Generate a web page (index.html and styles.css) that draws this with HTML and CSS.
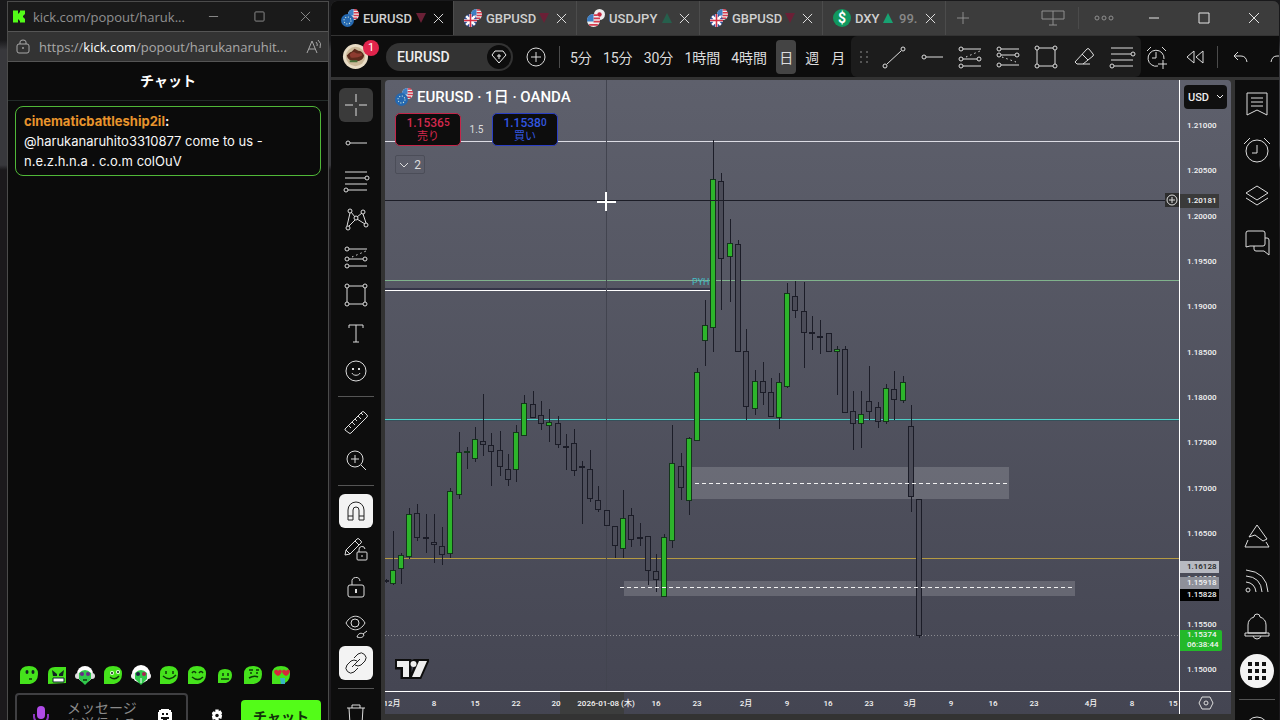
FILE: index.html
```html
<!DOCTYPE html>
<html lang="ja">
<head>
<meta charset="utf-8">
<title>EURUSD</title>
<link rel="stylesheet" href="styles.css">
</head>
<body>
<svg class="defs" aria-hidden="true">
  <symbol id="cross" viewBox="0 0 28 28"><path d="M14 3v8M14 17v8M3 14h8M17 14h8"/></symbol>
  <symbol id="hline" viewBox="0 0 28 28"><circle cx="6" cy="14" r="2"/><path d="M8 14h17"/></symbol>
  <symbol id="fib" viewBox="0 0 28 28"><path d="M3 5h22M3 11h20M3 17h22M6 23h19"/><circle cx="25" cy="11" r="2"/><circle cx="4" cy="23" r="2"/></symbol>
  <symbol id="pattern" viewBox="0 0 28 28"><path d="M5 21 8 8M9 7l4 5M15 12l5-4M21 9l3 9M23 19l-8-5M13 15l-6 6"/><circle cx="8" cy="6" r="2"/><circle cx="21" cy="7" r="2"/><circle cx="14" cy="13" r="2"/><circle cx="24" cy="20" r="2"/><circle cx="6" cy="23" r="2"/></symbol>
  <symbol id="trend" viewBox="0 0 28 28"><path d="M7 6h18M7 16h14M7 23h18"/><path d="M10 14 24 8" stroke-dasharray="1.5 3"/><circle cx="5" cy="6" r="2"/><circle cx="5" cy="16" r="2"/><circle cx="23" cy="16" r="2"/><circle cx="5" cy="23" r="2"/></symbol>
  <symbol id="trend2" viewBox="0 0 28 28"><path d="M7 6h18M7 12h14M7 22h18"/><path d="M8 14l14 5" stroke-dasharray="1.5 3"/><circle cx="5" cy="6" r="2"/><circle cx="5" cy="12" r="2"/><circle cx="23" cy="12" r="2"/><circle cx="5" cy="22" r="2"/></symbol>
  <symbol id="rect" viewBox="0 0 28 28"><path d="M7 5h14M7 23h14M5 7v14M23 7v14"/><circle cx="5" cy="5" r="2"/><circle cx="23" cy="5" r="2"/><circle cx="5" cy="23" r="2"/><circle cx="23" cy="23" r="2"/></symbol>
  <symbol id="type" viewBox="0 0 28 28"><path d="M7 9V6h14v3M14 6v17M11 23h6"/></symbol>
  <symbol id="smile" viewBox="0 0 28 28"><circle cx="14" cy="14" r="10"/><path d="M10 16c1 3 7 3 8 0"/><path d="M11 11v2M17 11v2" stroke-width="2"/></symbol>
  <symbol id="ruler" viewBox="0 0 28 28"><path d="M3 21 20 4q1-1 2 0l3 3q1 1 0 2L9 25q-1 1-2 0l-4-3zM7 18l2 2M10 14l3 3M13 11l2 2M16 8l3 3M19 5l2 2"/></symbol>
  <symbol id="zoom" viewBox="0 0 28 28"><circle cx="13" cy="13" r="8"/><path d="M19 19l5 5M9 13h8M13 9v8"/></symbol>
  <symbol id="magnet" viewBox="0 0 28 28"><path d="M6 23V13a8 8 0 0 1 16 0v10h-5V13a3 3 0 0 0-6 0v10zM6 19h5M17 19h5"/></symbol>
  <symbol id="penlock" viewBox="0 0 28 28"><path d="M3 20l1-5L15 4q1-1 2 0l2 2q1 1 0 2L8 19zM13 6l4 4M4 15l4 4"/><rect x="15" y="17" width="10" height="8" rx="1"/><path d="M17 17v-2a3 3 0 0 1 6-1M20 20v2"/></symbol>
  <symbol id="lock" viewBox="0 0 28 28"><rect x="6" y="12" width="16" height="12" rx="2"/><path d="M10 12V9a4 4 0 0 1 8-1"/><path d="M14 16v4" stroke-width="2"/></symbol>
  <symbol id="eye" viewBox="0 0 28 28"><path d="M4 12c5-9 14-9 19 0c-5 9-14 9-19 0z"/><circle cx="13" cy="12" r="4"/><path d="M15 26c1-4 5-5 7-2c-1 3-4 3-7 2zM21 23l4-3"/></symbol>
  <symbol id="link" viewBox="0 0 28 28"><path d="M12 9l4-4a5 5 0 0 1 7 7l-4 4q-3 2-6 0M16 19l-4 4a5 5 0 0 1-7-7l4-4q3-2 6 0M10 18l8-8"/></symbol>
  <symbol id="trash" viewBox="0 0 28 28"><path d="M5 8h18M10 8V5h8v3M7 8l1 16h12l1-16"/></symbol>
  <symbol id="line" viewBox="0 0 28 28"><circle cx="5" cy="23" r="2"/><circle cx="23" cy="6" r="2"/><path d="M7 21 21 8"/></symbol>
  <symbol id="eraser" viewBox="0 0 28 28"><path d="M5 19 17 6q1-1 2 0l4 5q1 1 0 2L13 21H7zM12 11l6 6M13 21h7"/></symbol>
  <symbol id="alarmadd" viewBox="0 0 28 28"><path d="M21 16a8 8 0 1 0-6 7M13 9v6H9M4 8l4-4M19 4l4 4M20 17v9M15 21h9"/></symbol>
  <symbol id="rewind" viewBox="0 0 28 28"><path d="M13 8v12l-7-6zM22 8v12l-7-6z"/></symbol>
  <symbol id="undo" viewBox="0 0 28 28"><path d="M12 9l-4 4 4 4M8 13h7q5 0 6 6"/></symbol>
  <symbol id="redo" viewBox="0 0 28 28"><path d="M16 9l4 4-4 4M20 13h-7q-5 0-6 6"/></symbol>
  <symbol id="close" viewBox="0 0 12 12"><path d="M1 1l10 10M11 1 1 11"/></symbol>
  <symbol id="list" viewBox="0 0 28 28"><path d="M4 3h20v22l-10-5-10 5zM8 8h12M8 12h12M8 16h12"/></symbol>
  <symbol id="alarm" viewBox="0 0 28 28"><circle cx="14" cy="15" r="11"/><path d="M14 9v8H9M1 8l6-6M21 2l6 6"/></symbol>
  <symbol id="layers" viewBox="0 0 28 28"><path d="M14 4 25 11 14 18 3 11zM3 16l11 7 11-7"/></symbol>
  <symbol id="chats" viewBox="0 0 28 28"><path d="M3 19V5q0-2 2-2h15q2 0 2 2v11q0 2-2 2H7zM22 10h2q2 0 2 2v15l-5-4h-8q-2 0-2-2v-3"/></symbol>
  <symbol id="hill" viewBox="0 0 28 28"><path d="M14 3 24 17 20 19 12 13 6 15zM5 18 2 25h24l-3-5"/></symbol>
  <symbol id="feed" viewBox="0 0 28 28"><circle cx="5" cy="23" r="2"/><path d="M3 3q21 2 22 22M3 9q15 1 16 16M3 15q9 1 10 10"/></symbol>
  <symbol id="bell" viewBox="0 0 28 28"><path d="M5 21v-8q0-6 6-8 0-3 3-3t3 3q6 2 6 8v8zM2 21h24v3H2zM10 24q1 3 4 3t4-3"/></symbol>
  <symbol id="apps" viewBox="0 0 34 34"><path d="M8 8h4v4H8zM15 8h4v4h-4zM22 8h4v4h-4zM8 15h4v4H8zM15 15h4v4h-4zM22 15h4v4h-4zM8 22h4v4H8zM15 22h4v4h-4zM22 22h4v4h-4z"/></symbol>
  <symbol id="us" viewBox="0 0 12 12"><circle cx="6" cy="6" r="6" fill="#eee"/><path d="M6 1h4M6 4h6M6 7h6M2 10h8" stroke="#d43b4e" stroke-width="1.6"/><path d="M0 7a6 6 0 0 1 6-7v7z" fill="#3e7fc4"/></symbol>
  <symbol id="eu" viewBox="0 0 12 12"><circle cx="6" cy="6" r="6" fill="#2568b0"/><circle cx="6" cy="6" r="3.2" stroke="#cde3dc" stroke-width="1" stroke-dasharray="1 1.5"/></symbol>
  <symbol id="gb" viewBox="0 0 12 12"><circle cx="6" cy="6" r="6" fill="#31529b"/><path d="M2 2l8 8M10 2l-8 8M6 0v12M0 6h12" stroke="#fff" stroke-width="2.2"/><path d="M6 0v12M0 6h12" stroke="#d32f45" stroke-width="1.4"/></symbol>
  <symbol id="jp" viewBox="0 0 12 12"><circle cx="6" cy="6" r="6" fill="#eee"/><circle cx="6" cy="6" r="2.4" fill="#c62840"/></symbol>
  <symbol id="eurusd" viewBox="0 0 18 18"><use href="#us" x="7" y="0" width="11" height="11"/><use href="#eu" x="0" y="5" width="13" height="13"/></symbol>
  <symbol id="gbpusd" viewBox="0 0 18 18"><use href="#us" x="7" y="0" width="11" height="11"/><use href="#gb" x="0" y="5" width="13" height="13"/></symbol>
  <symbol id="usdjpy" viewBox="0 0 18 18"><use href="#jp" x="7" y="0" width="11" height="11"/><use href="#us" x="0" y="5" width="13" height="13"/></symbol>
  <symbol id="blob" viewBox="0 0 20 20"><path d="M1 19V9Q1 1 10 1t9 8-8 10z" fill="#45e21c"/></symbol>
</svg>

<div class="desktop">
  <section class="chat">
    <header class="chat-title">
      <svg class="kick" viewBox="0 0 12 12"><path d="M0 0h5v3h1V2h1V0h5v4h-1v1h-1v2h1v1h1v4H7v-2H6V9H5v3H0z" fill="#53fc18"/></svg>
      <span class="chat-name">kick.com/popout/haruk...</span>
      <button class="win" aria-label="最小化"><svg viewBox="0 0 12 12"><path d="M1 6h10"/></svg></button>
      <button class="win" aria-label="最大化"><svg viewBox="0 0 12 12"><rect x="1" y="1" width="10" height="10" rx="1"/></svg></button>
      <button class="win" aria-label="閉じる"><svg><use href="#close"/></svg></button>
    </header>
    <div class="address">
      <svg class="padlock" viewBox="0 0 14 16"><rect x="1" y="5" width="12" height="9" rx="2"/><path d="M4 5V3q0-2 3-2t3 2v2"/><circle cx="7" cy="9" r=".6"/></svg>
      <span class="url">https://<b>kick.com</b>/popout/harukanaruhit...</span>
      <svg class="aloud" viewBox="0 0 16 16"><path d="M1 14 6 2l5 12M3 10h6M10 3q2 2 1 4M12 1q4 3 2 8"/></svg>
    </div>
    <h1 class="chat-head">チャット</h1>
    <div class="messages">
      <p class="message"><b>cinematicbattleship2il</b><strong>:</strong><br>@harukanaruhito3310877 come to us -<br>n.e.z.h.n.a . c.o.m colOuV</p>
    </div>
    <div class="emotes">
      <svg viewBox="0 0 20 20"><use href="#blob"/><ellipse cx="8" cy="7" rx="1.500" ry="2"/><ellipse cx="14" cy="7" rx="1.500" ry="2"/><path d="M10 14h3" class="mouth"/></svg>
      <svg viewBox="0 0 20 20"><path d="M1 19V9q0-7 7-7h11v16z" fill="#45e21c"/><path d="M5 5l5 4v2H6zM17 5l-5 4v2h4z"/><path d="M6 13h11v4H6z" fill="#fff" stroke="#123" /></svg>
      <svg viewBox="0 0 20 20"><circle cx="10" cy="9" r="8" fill="#fff"/><circle cx="3" cy="11" r="3" fill="#ddd"/><circle cx="17" cy="11" r="3" fill="#ddd"/><path d="M4 8q6-6 12 0v6l-6 6-6-6z" fill="#2fc94b"/><circle cx="7" cy="9" r="2" fill="#6a2a8a"/><circle cx="13" cy="9" r="2" fill="#6a2a8a"/><path d="M8 15h4" class="mouth"/></svg>
      <svg viewBox="0 0 20 20"><use href="#blob"/><circle cx="9" cy="8" r="2" fill="#e9ffe0"/><circle cx="15" cy="7" r="2" fill="#e9ffe0"/><circle cx="9" cy="8" r="1"/><circle cx="15" cy="7" r="1"/><path d="M7 12q5 4 9-1" class="mouth"/></svg>
      <svg viewBox="0 0 20 20"><circle cx="10" cy="9" r="9" fill="#fff"/><circle cx="3" cy="11" r="3" fill="#eee"/><circle cx="17" cy="11" r="3" fill="#eee"/><path d="M4 8q6-6 12 0v6l-6 6-6-6z" fill="#2fc94b"/><circle cx="7" cy="9" r="2" fill="#224"/><circle cx="13" cy="9" r="2" fill="#a25"/><path d="M10 13v5" stroke="#fff"/></svg>
      <svg viewBox="0 0 20 20"><use href="#blob"/><path d="M7 6v3M14 6v3M4 11q7 6 13-1" class="mouth"/></svg>
      <svg viewBox="0 0 20 20"><use href="#blob"/><path d="M5 8q2-3 4 0M12 8q2-3 4 0M5 12q6 5 11 0" class="mouth"/></svg>
      <svg viewBox="0 0 20 20"><path d="M3 18v-8q0-6 7-6t7 6-6 8z" fill="#45e21c"/><path d="M8 8v3M13 8v3M6 14h8" class="mouth"/></svg>
      <svg viewBox="0 0 20 20"><use href="#blob"/><path d="M6 5h4M13 5h3M8 7v2M14 7v2M6 13q5-3 9-1" class="mouth"/></svg>
      <svg viewBox="0 0 20 20"><use href="#blob"/><path d="M3 6q3-3 4 0 2-3 4 0-1 4-4 5-4-2-4-5zM11 6q2-3 4 0 2-3 4 0-1 4-4 5-4-2-4-5z" fill="#d8263c"/><path d="M9 13h5v6h-4z" fill="#38b6c4"/></svg>
    </div>
    <form class="composer">
      <div class="field">
        <svg class="mic" viewBox="0 0 16 22"><rect x="4" y="1" width="8" height="13" rx="4" fill="#b04be8"/><path d="M1 9v3q1 6 7 6t7-6V9M8 18v3" stroke="#8a35bb" stroke-width="2"/></svg>
        <textarea aria-label="メッセージを送信する" placeholder="メッセージを送信する"></textarea>
        <svg class="face" viewBox="0 0 14 14"><path d="M3 0h8v1h2v2h1v8h-1v2H1v-2H0V3h1V1h2z" fill="#fff"/><path d="M4 4h2v2H4zM8 4h2v2H8zM3 8h8v2H9v2H5v-2H3z"/></svg>
      </div>
      <button class="gear" type="button" aria-label="設定"><svg viewBox="0 0 14 14"><path d="M5 0h4v2l2-1 2 3-1 2 1 1-1 4-3-1v3H5v-2l-3 1-1-4 1-1-1-3 2-2 2 1z" fill="#fff"/><circle cx="7" cy="7" r="2" fill="#111"/></svg></button>
      <button class="send" type="button">チャット</button>
    </form>
  </section>

  <main class="app">
    <nav class="tabs">
      <div class="tab active"><svg class="pair"><use href="#eurusd"/></svg><span>EURUSD</span><i class="down"></i><button aria-label="閉じる"><svg><use href="#close"/></svg></button></div>
      <div class="tab"><svg class="pair"><use href="#gbpusd"/></svg><span>GBPUSD</span><i class="down"></i><button aria-label="閉じる"><svg><use href="#close"/></svg></button></div>
      <div class="tab"><svg class="pair"><use href="#usdjpy"/></svg><span>USDJPY</span><i class="up dim"></i><button aria-label="閉じる"><svg><use href="#close"/></svg></button></div>
      <div class="tab"><svg class="pair"><use href="#gbpusd"/></svg><span>GBPUSD</span><i class="down"></i><button aria-label="閉じる"><svg><use href="#close"/></svg></button></div>
      <div class="tab"><b class="dollar">$</b><span>DXY</span><i class="up"></i><span class="quote">99.</span><button aria-label="閉じる"><svg><use href="#close"/></svg></button></div>
      <button class="add" aria-label="新しいタブ"><svg viewBox="0 0 14 14"><path d="M7 0v14M0 7h14"/></svg></button>
      <div class="window-tools">
        <button aria-label="画面"><svg class="wide" viewBox="0 0 26 18"><path d="M2 2h22v8H2zM13 2v14M9 16h8"/></svg></button>
        <i class="bar"></i>
        <button aria-label="メニュー"><svg class="wide" viewBox="0 0 26 18"><circle cx="6" cy="9" r="2"/><circle cx="13" cy="9" r="2"/><circle cx="20" cy="9" r="2"/></svg></button>
        <button class="light" aria-label="最小化"><svg viewBox="0 0 12 12"><path d="M1 6h10"/></svg></button>
        <button class="light" aria-label="最大化"><svg viewBox="0 0 12 12"><path d="M1 1h10v10H1z"/></svg></button>
        <button class="light" aria-label="閉じる"><svg><use href="#close"/></svg></button>
      </div>
    </nav>

    <div class="toolbar">
      <div class="avatar">
        <svg viewBox="0 0 28 28"><circle cx="14" cy="14" r="13" fill="#e8dcc5"/><circle cx="14" cy="14" r="10" fill="#cbb898"/><path d="M5 13q3-4 5-4l3-3 4 2q4 0 6 5-1 6-9 6t-9-6z" fill="#5c2a1c"/><path d="M8 12q3-4 6-2t6 0l1 3q-6 3-12 2z" fill="#8e3b30"/><path d="M8 19h8" stroke="#487038" stroke-width="2"/></svg>
        <span class="badge">1</span>
      </div>
      <button class="symbol"><span>EURUSD</span><svg viewBox="0 0 24 24"><circle cx="12" cy="12" r="12" fill="#0d0d0d"/><path d="M8 6h8l3 4-7 8-7-8zM12 9v5M10 11h4"/></svg></button>
      <button class="compare" aria-label="比較"><svg viewBox="0 0 22 22"><circle cx="11" cy="11" r="9"/><path d="M11 6v10M6 11h10"/></svg></button>
      <i class="bar"></i>
      <div class="frames">
        <button>5分</button><button>15分</button><button>30分</button><button>1時間</button><button>4時間</button><button class="short on">日</button><button class="short">週</button><button class="short">月</button>
      </div>
      <div class="drawings">
        <svg class="grip" viewBox="0 0 10 14"><path d="M1 1h2v2H1zM7 1h2v2H7zM1 6h2v2H1zM7 6h2v2H7zM1 11h2v2H1zM7 11h2v2H7z" fill="#555"/></svg>
        <button aria-label="トレンドライン"><svg><use href="#line"/></svg></button>
        <button aria-label="水平レイ"><svg><use href="#hline"/></svg></button>
        <button aria-label="ロング"><svg><use href="#trend"/></svg></button>
        <button aria-label="ショート"><svg><use href="#trend2"/></svg></button>
        <button aria-label="四角形"><svg><use href="#rect"/></svg></button>
        <button aria-label="消しゴム"><svg><use href="#eraser"/></svg></button>
        <button aria-label="フィボナッチ"><svg><use href="#fib"/></svg></button>
      </div>
      <div class="actions">
        <button aria-label="アラート"><svg><use href="#alarmadd"/></svg></button>
        <button aria-label="リプレイ"><svg><use href="#rewind"/></svg></button>
        <i class="bar"></i>
        <button aria-label="元に戻す"><svg><use href="#undo"/></svg></button>
        <button aria-label="やり直し"><svg><use href="#redo"/></svg></button>
      </div>
    </div>

    <div class="workspace">
      <aside class="tools">
        <button class="on" aria-label="十字"><svg><use href="#cross"/></svg></button>
        <button aria-label="水平レイ"><svg><use href="#hline"/></svg></button>
        <button aria-label="フィボナッチ"><svg><use href="#fib"/></svg></button>
        <button aria-label="パターン"><svg><use href="#pattern"/></svg></button>
        <button aria-label="予測"><svg><use href="#trend"/></svg></button>
        <button aria-label="図形"><svg><use href="#rect"/></svg></button>
        <button aria-label="テキスト"><svg><use href="#type"/></svg></button>
        <button aria-label="アイコン"><svg><use href="#smile"/></svg></button>
        <hr>
        <button aria-label="計測"><svg><use href="#ruler"/></svg></button>
        <button aria-label="ズーム"><svg><use href="#zoom"/></svg></button>
        <hr>
        <button class="white" aria-label="マグネット"><svg><use href="#magnet"/></svg></button>
        <button aria-label="描画モード"><svg><use href="#penlock"/></svg></button>
        <button aria-label="ロック"><svg><use href="#lock"/></svg></button>
        <button aria-label="表示"><svg><use href="#eye"/></svg></button>
        <button class="white" aria-label="同期"><svg><use href="#link"/></svg></button>
        <hr>
        <button aria-label="削除"><svg><use href="#trash"/></svg></button>
      </aside>

      <section class="chart">
        <div class="pane">
          <svg class="plot" id="plot">
            <g transform="translate(-385 -80)">
              <rect x="691" y="467" width="318" height="32" class="zone"/>
              <rect x="624" y="581" width="451" height="15" class="zone"/>
              <path d="M385 141.500H3000" stroke="#dcdce4"/>
              <path d="M385 280.500H3000" stroke="#80b28c"/>
              <path d="M385 289H711" stroke="#15152c"/><path d="M385 290.500H711" stroke="#fff"/>
              <path d="M385 420.500H3000" stroke="#36505a"/>
              <path d="M385 419.500H3000" stroke="#4fd0c8"/>
              <path d="M385 558.500H3000" stroke="#b59a42"/>
              <path d="M385 635.500H3000" stroke="#8a8b91" stroke-dasharray="1 2"/>
              <path d="M606.500 80V700" stroke="#42444f"/>
              <text x="692" y="285" class="pyh">PYH</text>
              <g id="candles"></g>
              <path d="M695 483.500H1009M620 587.500H1075" stroke="#f1f1f1" stroke-dasharray="4 3"/>
              <path d="M385 200.500H3000" stroke="#1c1d27"/>
              <path d="M606 192v19M597 202h19" stroke="#fff" stroke-width="2"/>
            </g>
          </svg>
          <div class="legend">
            <h2><svg class="pair"><use href="#eurusd"/></svg>EURUSD · 1日 · OANDA</h2>
            <div class="trade">
              <button class="sell"><span>1.1536<small>5</small></span>売り</button>
              <span class="spread">1.5</span>
              <button class="buy"><span>1.1538<small>0</small></span>買い</button>
            </div>
            <button class="collapse"><svg viewBox="0 0 10 6"><path d="M1 1l4 4 4-4"/></svg>2</button>
          </div>
          <svg class="logo" viewBox="0 0 34 20"><path d="M1 1h14v18H7V9H1zM17 5a3.500 3.500 0 1 1 5 3zM23 1h10l-8 18h-9z" fill="#0d0d0d" stroke="#0d0d0d" stroke-width="3"/><path d="M2 2h12v16H8V8H2zM24 2h8l-7 16h-8z" fill="#eee"/><circle cx="18.500" cy="5" r="3" fill="#eee"/></svg>
          <button class="plus" aria-label="追加"><svg viewBox="0 0 14 14"><circle cx="7" cy="7" r="5"/><path d="M7 4v6M4 7h6"/></svg></button>
        </div>
        <div class="prices">
          <div class="currency">
            <select aria-label="通貨"><option>USD</option></select>
            <svg viewBox="0 0 8 6"><path d="M1 1l3 3 3-3"/></svg>
          </div>
          <ol>
            <li>1.21000</li><li>1.20500</li><li>1.20000</li><li>1.19500</li><li>1.19000</li><li>1.18500</li><li>1.18000</li><li>1.17500</li><li>1.17000</li><li>1.16500</li><li>1.16000</li><li>1.15500</li><li>1.15000</li>
          </ol>
          <span class="tag cursor">1.20181</span>
          <span class="tag pale">1.16128</span>
          <span class="tag mid">1.15918</span>
          <span class="tag black">1.15828</span>
          <span class="tag last">1.15374<br>06:38:44</span>
        </div>
        <svg class="times" id="times"></svg>
        <button class="hex" aria-label="設定"><svg viewBox="0 0 16 16"><path d="M4 2h8l3 6-3 6H4L1 8z"/><circle cx="8" cy="8" r="2"/></svg></button>
      </section>

      <aside class="side">
        <button aria-label="ウォッチリスト"><svg><use href="#list"/></svg></button>
        <button aria-label="アラート"><svg><use href="#alarm"/></svg></button>
        <button aria-label="オブジェクト"><svg><use href="#layers"/></svg></button>
        <button aria-label="チャット"><svg><use href="#chats"/></svg></button>
        <div class="side-end">
          <button aria-label="アイデア"><svg><use href="#hill"/></svg></button>
          <button aria-label="配信"><svg><use href="#feed"/></svg></button>
          <button aria-label="通知"><svg><use href="#bell"/></svg></button>
          <button class="apps" aria-label="アプリ"><svg><use href="#apps"/></svg></button>
          <hr>
          <button aria-label="ヘルプ"><svg viewBox="0 0 28 28"><circle cx="14" cy="14" r="11"/><path d="M10 11q0-4 4-4t4 4q0 2-4 4v2"/></svg></button>
        </div>
      </aside>
    </div>
  </main>
</div>
<script src="chart.js"></script>
</body>
</html>
```
FILE: styles.css
```css
* { box-sizing: border-box; }
body { margin: 0; background: #242426; color: #ddd; font-family: Roboto, "Noto Sans CJK JP", sans-serif; font-size: 14px; }
button { background: none; border: 0; padding: 0; margin: 0; color: inherit; font: inherit; display: flex; align-items: center; justify-content: center; flex: none; }
svg { fill: none; stroke: currentColor; flex: none; display: block; }
svg [fill]:not([stroke]) { stroke: none; }
.defs { position: absolute; width: 0; height: 0; }
.desktop { display: flex; height: 100vh; overflow: hidden; padding: 1px 1px 0 7px; gap: 2px; background: linear-gradient(#19191b 40px, #38383c 50px, #38383c 165px, #1b191c 170px); }

.chat { width: 322px; flex: none; display: flex; flex-direction: column; background: #0b0b0b; border: solid #4b4b4b; border-width: 1px 1px 0; }
.chat-title { display: flex; align-items: center; height: 29px; padding: 0 0 0 5px; background: #1a1a1a; color: #919191; font: 13px "Open Sans", sans-serif; }
.kick { width: 12px; height: 13px; margin-right: 8px; }
.chat-name { flex: 1; min-width: 0; white-space: nowrap; }
.win { width: 46px; height: 28px; }
.win svg { width: 11px; height: 11px; }
.address { display: flex; align-items: center; gap: 9px; height: 31px; padding: 0 6px 0 8px; background: #333; border: solid #555; border-width: 1px 0; color: #a9a9a9; font: 13px "Open Sans", sans-serif; }
.padlock { width: 14px; height: 16px; }
.url { flex: 1; white-space: nowrap; }
.url b { font-weight: 400; color: #fff; }
.aloud { width: 16px; height: 16px; }
.chat-head { margin: 0; height: 39px; border-bottom: 1px solid #232b29; font: bold 14px/36px "Noto Sans CJK JP", sans-serif; text-align: center; color: #fff; }
.messages { flex: 1; padding: 5px 7px; }
.message { margin: 0; padding: 4px 8px; border: 1px solid #50b838; border-radius: 8px; font: 400 13px/20px Inter, sans-serif; color: #f8f8f8; }
.message b { color: #e8942c; }
.emotes { display: flex; gap: 8px; padding-left: 11px; margin-bottom: 8px; }
.emotes svg { width: 20px; height: 20px; stroke: none; fill: #122; }
.emotes .mouth { stroke: #0c3a08; stroke-width: 1.5; fill: none; }
.composer { display: flex; align-items: flex-start; height: 27px; padding: 0 7px; }
.field { display: flex; flex: 1; min-width: 0; height: 48px; padding: 0 14px 0 16px; border: 2px solid #3f3f42; border-radius: 4px; }
.mic { width: 16px; height: 22px; margin-top: 10px; }
.field textarea { flex: 1; width: 0; min-width: 0; height: 40px; padding: 4px 11px 0 18px; background: none; border: 0; resize: none; overflow: hidden; font: 14px/16px "Noto Sans CJK JP", sans-serif; }
.field textarea::placeholder { color: #8a8a8a; }
.face { width: 14px; height: 14px; margin-top: 14px; fill: #111; stroke: none; }
.gear { width: 53px; height: 44px; padding-left: 4px; }
.gear svg { width: 12px; height: 13px; }
.send { width: 80px; height: 32px; margin-top: 7px; border-radius: 4px; background: #53fc18; color: #12330a; font: bold 14px/30px "Noto Sans CJK JP", sans-serif; }

.app { flex: 1; min-width: 0; display: flex; flex-direction: column; background: #333; border-radius: 6px 6px 0 0; overflow: hidden; }
.tabs { display: flex; height: 34px; background: #3c3c3c; color: #c9c9c9; flex: none; }
.tab { display: flex; align-items: center; flex: 0 1 123px; padding: 0 9px 0 10px; border-right: 1px solid #4c4c4c; color: #d0d0d0; font-weight: 500; font-size: 13px; }
.tab.active { background: #0d0d0d; }
.pair { width: 18px; height: 18px; margin-right: 4px; stroke: none; }
.tab span { width: 53px; }
.tab button { margin-left: auto; width: 12px; height: 12px; }
.tab button svg { width: 11px; height: 11px; stroke: #eee; }
.up, .down { border: solid transparent; border-width: 0 5px; }
.down { border-top: 10px solid #6a2036; }
.up { border-bottom: 10px solid #18a272; }
.up.dim { border-bottom-color: #265f4c; }
.dollar { width: 18px; height: 18px; margin-right: 4px; border-radius: 50%; background: #11985f; color: #fff; text-align: center; font-size: 14px; line-height: 18px; }
.tab .dollar + span { width: 28px; }
.tab .quote { width: 22px; margin-left: 6px; color: #888; }
.add { width: 33px; }
.add svg { width: 12px; height: 12px; stroke: #999; }
.window-tools { display: flex; align-items: center; margin-left: auto; color: #8f8f8f; }
.window-tools button { width: 50px; height: 34px; }
.window-tools svg { width: 12px; height: 12px; }
.window-tools .wide { width: 26px; height: 18px; }
.window-tools .light { color: #e5e5e5; }
.bar { width: 1px; height: 22px; background: #4b4b4b; flex: none; }

.toolbar { display: flex; align-items: center; height: 41px; margin-top: 1px; background: #0d0d0d; flex: none; overflow: hidden; }
.avatar { position: relative; margin: 0 17px 0 11px; }
.avatar svg { width: 27px; height: 27px; }
.badge { position: absolute; left: 21px; top: -3px; width: 16px; height: 16px; border-radius: 8px; background: #e0244c; color: #fff; font-size: 11px; line-height: 16px; text-align: center; }
.symbol { width: 127px; height: 28px; justify-content: space-between; padding: 0 2px 0 11px; border-radius: 14px; background: #333; color: #eee; font-weight: 500; }
.symbol svg { width: 24px; height: 24px; }
.compare { width: 46px; }
.compare svg { width: 22px; height: 22px; }
.frames { display: flex; height: 34px; flex: none; margin: 0 10px 0 5px; }
.frames button { padding: 0 6px 0 5px; }
.frames .short { padding: 0 3px; margin: 0 3px; border-radius: 4px; }
.frames .on { background: #444; }
.drawings { display: flex; align-items: center; align-self: stretch; flex: none; margin-left: -10px; padding-left: 8px; background: #1c1c1c; border-radius: 6px; }
.grip { width: 10px; height: 14px; margin-right: 6px; }
.drawings button { width: 38px; }
.drawings svg:not(.grip), .actions svg { width: 28px; height: 28px; }
.actions { display: flex; align-items: center; gap: 6px; }
.actions button { width: 32px; }

.workspace { flex: 1; min-height: 0; display: flex; margin-top: 3px; gap: 4px; }
.tools { display: flex; flex-direction: column; align-items: center; gap: 4px; width: 50px; padding: 8px 1px 0 0; background: #0d0d0d; overflow: hidden; flex: none; }
.tools button { width: 34px; height: 34px; border-radius: 6px; }
.tools svg, .side svg { width: 28px; height: 28px; }
.tools .on { background: #3a3a3a; }
.tools .white { background: #f3f3f3; color: #222; }
hr { width: 36px; height: 1px; margin: 4px 0; border: 0; background: #555; flex: none; }
.chart { flex: 1; min-width: 0; display: grid; grid-template: 1fr 22px / 1fr 51px; margin-bottom: 6px; background: linear-gradient(#5e606c, #444552); border-radius: 4px 4px 0 0; overflow: hidden; }
.pane { position: relative; min-width: 0; min-height: 0; border: solid #fff; border-width: 0 1px 1px 0; }
.plot { position: absolute; inset: 0; width: 100%; height: 100%; }
.zone { fill: #ffffff29; stroke: none; }
.pyh { font: 9px Roboto, sans-serif; fill: #45bcc4; stroke: none; }
.legend { position: relative; padding: 8px 10px; }
.legend h2 { display: flex; align-items: center; margin: 0 0 7px; font-weight: 500; font-size: 15px; line-height: 18px; color: #fff; }
.trade { display: flex; align-items: center; }
.sell, .buy { flex-direction: column; width: 66px; height: 33px; border: 1px solid #c42549; border-radius: 5px; background: #0d0d0d; color: #d3294e; font-size: 11px; line-height: 14px; }
.buy { border-color: #2b3fc4; color: #3358e2; }
.trade button span { font-weight: 500; font-size: 12px; }
.trade small { font-size: 10px; vertical-align: 1px; }
.spread { width: 31px; text-align: center; font-size: 10px; }
.collapse { width: 30px; height: 19px; margin-top: 9px; gap: 5px; border: 1px solid #4b4d58; border-radius: 2px; font-size: 12px; }
.collapse svg { width: 10px; height: 6px; }
.logo { position: absolute; left: 10px; bottom: 12px; width: 34px; height: 20px; }
.plus { position: absolute; right: 0; top: 113px; width: 14px; height: 14px; background: #2d2d2d; }
.plus svg { width: 14px; height: 14px; }
.prices { position: relative; display: flex; flex-direction: column; border-bottom: 1px solid #fff; color: #f4f4f4; font-weight: 500; font-size: 8px; line-height: 10px; }
.currency { display: grid; align-items: center; margin: 5px 4px 12px; }
.currency select { grid-area: 1 / 1; appearance: none; width: 43px; height: 24px; padding: 0 0 0 4px; border: 0; border-radius: 4px; background: #101010; color: #eee; font: 500 11px Roboto, sans-serif; }
.currency svg { grid-area: 1 / 1; justify-self: end; width: 8px; height: 6px; margin-right: 3px; pointer-events: none; }
.prices ol { display: flex; flex: 1; flex-direction: column; justify-content: space-between; list-style: none; margin: 0; padding: 0 0 16px 7px; }
.tag { position: absolute; left: 0; width: 39px; padding-left: 7px; line-height: 12px; }
.cursor { top: 114px; background: #3a3a3a; line-height: 14px; }
.pale { top: 481px; background: #b7b9c1; color: #222; }
.mid { top: 497px; background: #8e9099; }
.black { top: 509px; background: #000; }
.last { top: 550px; width: 42px; padding-bottom: 1px; background: #23b92a; line-height: 10px; border-radius: 0 2px 2px 0; }
.times { width: 100%; height: 22px; overflow: visible; border-right: 1px solid #fff; }
.times text { font: 500 8px Roboto, "Noto Sans CJK JP", sans-serif; fill: #f4f4f4; stroke: none; text-anchor: middle; }
.times rect { fill: #3c3d3d; stroke: none; }
.hex svg { width: 16px; height: 16px; }
.up-candle { fill: #2db52b; stroke: #14351b; }
.down-candle { fill: #4b4c58; stroke: #1b1c27; }
.wick { stroke: #1c1d28; }
.side { display: flex; flex-direction: column; align-items: center; gap: 12px; width: 44px; padding-top: 7px; background: #0d0d0d; flex: none; }
.side button { width: 34px; height: 34px; }
.side-end { display: flex; flex-direction: column; align-items: center; gap: 11px; margin: auto 0 -25px; }
.side-end hr { margin: 0; }
.side .apps { border-radius: 50%; background: #f3f3f3; }
.side .apps svg { width: 34px; height: 34px; fill: #111; stroke: none; }
```
FILE: chart.js
```js
// centre x, high, body top, body bottom, low, rising
const candles = [
[386,579,580,582,583,0],[393,531,570,584,585,1],[401,553,555,569,584,1],[409,508,514,557,559,1],[417,504,513,538,541,0],
[426,514,537,539,553,0],[434,514,542,545,563,0],[442,527,546,555,565,0],[450,488,491,554,558,1],[459,432,452,495,499,1],
[467,447,451,453,469,1],[475,427,439,459,462,1],[483,394,441,445,456,0],[491,433,445,452,486,0],[500,431,450,467,476,0],
[508,454,469,480,486,0],[516,425,432,470,482,1],[524,395,403,436,436,1],[533,391,404,418,418,0],[541,401,415,424,430,0],
[549,409,422,426,442,1],[558,416,423,445,448,0],[566,434,446,447,470,0],[574,429,443,471,476,0],[582,461,466,468,524,0],
[590,450,469,499,502,0],[598,486,500,510,512,0],[607,510,510,526,526,0],[615,526,526,546,558,0],[623,490,518,549,558,1],
[631,508,515,540,547,0],[640,523,537,538,546,0],[648,536,536,571,585,0],[656,554,571,580,592,0],[664,534,537,597,597,1],
[672,425,463,541,548,1],[681,453,466,488,500,0],[689,437,438,501,515,1],[697,368,372,441,441,1],[705,300,325,341,366,1],
[713,140,179,328,352,1],[721,173,181,259,310,0],[730,219,243,257,302,1],[738,240,244,352,352,0],[746,329,351,407,420,0],
[755,370,381,409,415,1],[763,362,381,393,405,0],[771,378,392,417,417,0],[779,373,382,418,429,1],[787,283,293,387,388,1],
[795,281,296,311,318,0],[804,282,311,333,368,0],[812,316,332,333,350,0],[820,320,336,337,354,0],[829,333,333,352,352,0],
[837,346,349,352,395,1],[845,346,349,413,413,0],[853,391,411,424,450,0],[861,391,414,424,448,1],[869,366,401,412,420,0],
[878,402,407,422,428,0],[886,384,388,422,424,1],[894,371,389,400,420,0],[903,376,382,401,403,1],[911,405,426,497,512,0],
[919,499,499,636,638,0]
];
document.getElementById("candles").innerHTML = candles.map(([x, h, t, b, l, up]) =>
  `<path class="wick" d="M${x}.5 ${h}V${l}"/><rect class="${up ? "up" : "down"}-candle" x="${x - 3}.5" y="${t + .5}" width="5" height="${Math.max(b - t - 1, 1)}"/>`
).join("");

// label and distance from the left edge of the pane
const days = [["12月",7],["8",49],["15",90],["22",131],["20",171],["16",271],["23",312],["2月",361],["9",402],["16",443],["23",484],["3月",525],["9",566],["16",608],["23",649],["4月",706],["8",747],["15",788]];
document.getElementById("times").innerHTML =
  '<rect x="175" y="-1" width="64" height="23"/><text x="221" y="14">2026-01-08 (木)</text>' +
  days.map(([label, x]) => `<text x="${x}" y="14">${label}</text>`).join("");
```
